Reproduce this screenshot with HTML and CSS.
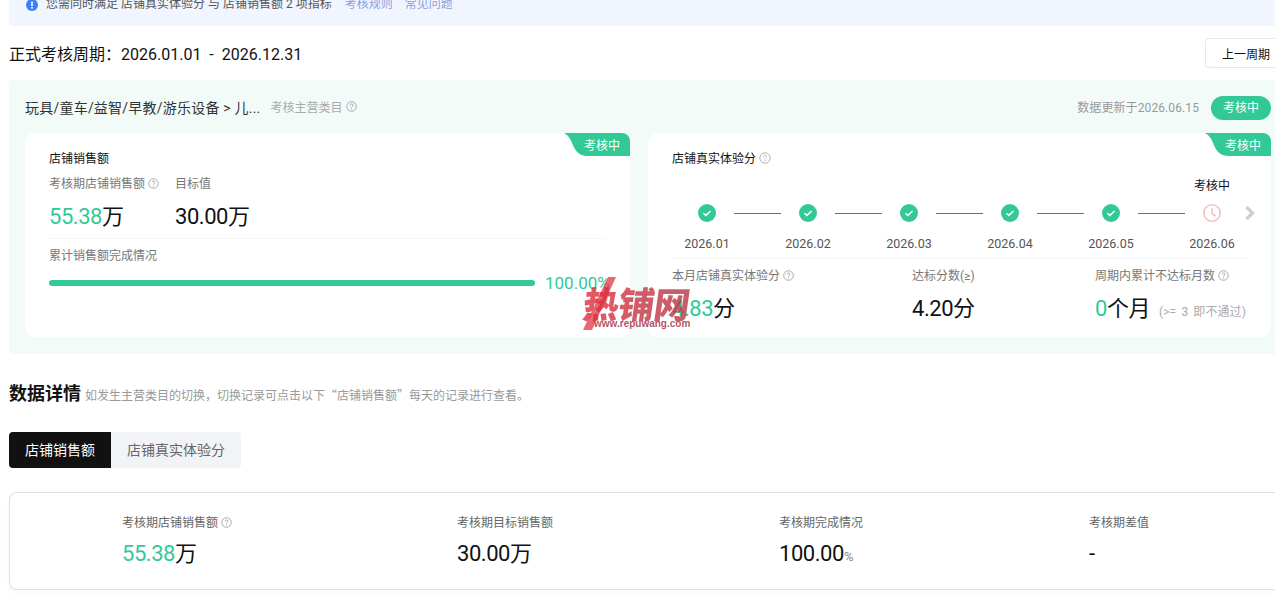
FILE: index.html
```html
<!DOCTYPE html>
<html lang="zh-CN">
<head>
<meta charset="utf-8">
<title>店铺考核</title>
<link rel="stylesheet" href="styles.css">
</head>
<body>
<div class="page">
  <div class="notice">
    <svg class="notice-icon" viewBox="0 0 12 12"><circle cx="6" cy="6" r="6" fill="#3d7ff5"/><rect x="5.2" y="2.6" width="1.6" height="4.4" rx=".6" fill="#fff"/><circle cx="6" cy="8.7" r=".95" fill="#fff"/></svg>
    <span class="notice-text">您需同时满足 店铺真实体验分 与 店铺销售额 2 项指标</span>
    <a class="notice-link">考核规则</a>
    <a class="notice-link">常见问题</a>
  </div>

  <div class="period-row">
    <div class="period">正式考核周期：<span class="period-date">2026.01.01 - 2026.12.31</span></div>
    <button class="prev-btn">上一周期</button>
  </div>

  <section class="panel">
    <div class="panel-head">
      <div class="cat">玩具/童车/益智/早教/游乐设备 &gt; 儿...</div>
      <div class="cat-label">考核主营类目 <svg class="help" viewBox="0 0 12 12"><use href="#q"/></svg></div>
      <div class="updated">数据更新于2026.06.15</div>
      <div class="pill">考核中</div>
    </div>
    <div class="cards">
      <div class="card card-left">
        <svg class="corner" viewBox="0 0 66 23"><path d="M0 0H58a8 8 0 0 1 8 8V23H24C14 23 11 17 8 10 6 5 4 2 0 0Z" fill="#33c997"/></svg>
        <span class="corner-text">考核中</span>
        <h3 class="card-title">店铺销售额</h3>
        <div class="metric-pair">
          <div class="metric-a">
            <div class="label">考核期店铺销售额 <svg class="help" viewBox="0 0 12 12"><use href="#q"/></svg></div>
            <div class="value"><em>55.38</em>万</div>
          </div>
          <div class="metric-b">
            <div class="label">目标值</div>
            <div class="value">30.00万</div>
          </div>
        </div>
        <div class="divider"></div>
        <div class="label progress-label">累计销售额完成情况</div>
        <div class="progress-row">
          <div class="progress"></div>
          <div class="progress-num">100.00%</div>
        </div>
      </div>

      <div class="card card-right">
        <svg class="corner" viewBox="0 0 66 23"><path d="M0 0H58a8 8 0 0 1 8 8V23H24C14 23 11 17 8 10 6 5 4 2 0 0Z" fill="#33c997"/></svg>
        <span class="corner-text">考核中</span>
        <h3 class="card-title">店铺真实体验分 <svg class="help help-t" viewBox="0 0 12 12"><use href="#q"/></svg></h3>
        <div class="current">考核中</div>
        <div class="timeline">
          <div class="step"><svg class="dot" viewBox="0 0 18 18"><use href="#ok"/></svg><span class="month">2026.01</span></div>
          <i class="line"></i>
          <div class="step"><svg class="dot" viewBox="0 0 18 18"><use href="#ok"/></svg><span class="month">2026.02</span></div>
          <i class="line"></i>
          <div class="step"><svg class="dot" viewBox="0 0 18 18"><use href="#ok"/></svg><span class="month">2026.03</span></div>
          <i class="line"></i>
          <div class="step"><svg class="dot" viewBox="0 0 18 18"><use href="#ok"/></svg><span class="month">2026.04</span></div>
          <i class="line"></i>
          <div class="step"><svg class="dot" viewBox="0 0 18 18"><use href="#ok"/></svg><span class="month">2026.05</span></div>
          <i class="line"></i>
          <div class="step"><svg class="dot" viewBox="0 0 18 18"><circle cx="9" cy="9" r="8.2" fill="none" stroke="#fb9fa8" stroke-width="1.1"/><path d="M9 4.2V9.4L12.6 12.2" fill="none" stroke="#fb9fa8" stroke-width="1.1"/></svg><span class="month">2026.06</span></div>
          <svg class="chev" viewBox="0 0 10 14"><path d="M1.5 1L7.5 7 1.5 13" fill="none" stroke="#cfcfcf" stroke-width="3.4"/></svg>
        </div>
        <div class="divider"></div>
        <div class="score-row">
          <div class="score-a">
            <div class="label">本月店铺真实体验分 <svg class="help" viewBox="0 0 12 12"><use href="#q"/></svg></div>
            <div class="value"><em>4.83</em>分</div>
          </div>
          <div class="score-b">
            <div class="label">达标分数(≥)</div>
            <div class="value">4.20分</div>
          </div>
          <div class="score-c">
            <div class="label">周期内累计不达标月数 <svg class="help" viewBox="0 0 12 12"><use href="#q"/></svg></div>
            <div class="value"><em>0</em>个月<small class="hint">(&gt;= 3 即不通过)</small></div>
          </div>
        </div>
      </div>
    </div>
  </section>

  <div class="detail-head">
    <h2 class="detail-title">数据详情</h2>
    <span class="detail-sub">如发生主营类目的切换，切换记录可点击以下“店铺销售额”每天的记录进行查看。</span>
  </div>

  <div class="tabs">
    <div class="tab tab-on">店铺销售额</div>
    <div class="tab">店铺真实体验分</div>
  </div>

  <div class="summary">
    <div class="sum">
      <div class="sum-label">考核期店铺销售额 <svg class="help" viewBox="0 0 12 12"><use href="#q"/></svg></div>
      <div class="sum-value"><em>55.38</em>万</div>
    </div>
    <div class="sum">
      <div class="sum-label">考核期目标销售额</div>
      <div class="sum-value">30.00万</div>
    </div>
    <div class="sum">
      <div class="sum-label">考核期完成情况</div>
      <div class="sum-value">100.00<small class="pct">%</small></div>
    </div>
    <div class="sum">
      <div class="sum-label">考核期差值</div>
      <div class="sum-value">-</div>
    </div>
  </div>

  <div class="watermark">
    <svg class="wm-slash" viewBox="0 0 34 60"><path d="M25 5H33L9 58H0Z" fill="#e2434f" fill-opacity=".8"/></svg>
    <div class="wm-main">热铺网</div>
    <div class="wm-sub">www.repuwang.com</div>
  </div>
</div>

<svg class="defs" width="0" height="0">
  <defs>
    <g id="q"><circle cx="6" cy="6" r="5.2" fill="none" stroke="currentColor" stroke-width=".9"/><path d="M4.4 4.8C4.4 3.8 5.1 3.2 6 3.2S7.6 3.8 7.6 4.6C7.6 5.7 6 5.8 6 7.2" fill="none" stroke="currentColor" stroke-width=".9"/><circle cx="6" cy="8.7" r=".6" fill="currentColor"/></g>
    <g id="ok"><circle cx="9" cy="9" r="9" fill="#33c997"/><path d="M5.4 9.2L7.9 11.4 12.6 7" fill="none" stroke="#fff" stroke-width="1.5"/></g>
  </defs>
</svg>
</body>
</html>
```
FILE: styles.css
```css
* { box-sizing: border-box; }
html, body { margin: 0; padding: 0; background: #fff; overflow: hidden; }
body { width: 1275px; height: 607px; color: #111; }
.page { position: relative; width: 1275px; height: 607px; overflow: hidden; padding-left: 9px; font-family: Roboto, "Noto Sans CJK SC", sans-serif; }
.defs { position: absolute; }
em { font-style: normal; color: #33c997; }

.notice { width: 1266px; height: 26px; background: #f0f5ff; border-radius: 0 0 3px 3px; padding: 0 0 0 17px; display: flex; align-items: flex-start; font-size: 12px; line-height: 12px; color: #555; margin-bottom: 12px; overflow: hidden; }
.notice-icon { width: 12px; height: 12px; margin: -1px 8px 0 0; flex: none; }
.notice-text { margin-top: -3px; line-height: 14px; }
.notice-link { color: #8f9fdb; margin: -3px 0 0 12px; line-height: 14px; }
.notice-text + .notice-link { margin-left: 13px; }

.period-row { display: flex; justify-content: space-between; width: 1266px; height: 30px; align-items: center; margin-bottom: 12px; }
.period { font-size: 16px; color: #111; margin-top: -1px; }
.period-date { word-spacing: 4px; }
.prev-btn { width: 70px; height: 30px; flex: none; background: #fff; border: 1px solid #e6e7ef; border-right: 0; border-radius: 4px 0 0 4px; font: 12px Roboto, "Noto Sans CJK SC", sans-serif; color: #111; padding: 0 0 0 16px; text-align: left; }

.panel { width: 1266px; height: 274px; background: #f2fbf8; border-radius: 4px 0 0 4px; padding: 0 4px 0 16px; }
.panel-head { height: 53px; display: flex; align-items: center; }
.cat { font-size: 14px; color: #333; letter-spacing: .22px; }
.cat-label { font-size: 12px; color: #aaa; margin-left: 10px; display: flex; align-items: center; gap: 3px; }
.updated { font-size: 12px; color: #999; margin-left: auto; letter-spacing: .1px; }
.pill { width: 60px; height: 24px; line-height: 24px; background: #33c997; color: #fff; border-radius: 12px; font-size: 12px; text-align: center; margin: 3px 0 0 12px; }
.help { width: 11px; height: 11px; color: #999; vertical-align: -1px; flex: none; }
.help-t { width: 12px; height: 12px; color: #aaa; }

.cards { display: flex; gap: 18px; }
.card { position: relative; height: 204px; background: #fff; border-radius: 10px; padding: 18px 24px 0; }
.card-left { width: 605px; }
.card-right { width: 623px; }
.corner { position: absolute; top: 0; right: 0; width: 66px; height: 23px; }
.corner-text { position: absolute; top: 4px; right: 10px; font-size: 12px; line-height: 18px; color: #fff; }
.card-title { margin: 0; font-size: 12px; line-height: 16px; font-weight: 400; color: #111; }

.label { font-size: 12px; line-height: 16px; color: #777; white-space: nowrap; }
.value { font-size: 22px; line-height: 28px; color: #111; white-space: nowrap; letter-spacing: -.45px; }

.metric-pair { display: flex; margin-top: 9px; }
.metric-a { width: 126px; }
.metric-a .value, .metric-b .value { margin-top: 11px; }
.divider { height: 1px; background: #f5f5f5; }
.card-left .divider { margin-top: 7px; width: 557px; }
.progress-label { margin-top: 8px; line-height: 19px; }
.progress-row { display: flex; margin-top: 14px; height: 6px; align-items: center; }
.progress { width: 486px; height: 6px; border-radius: 3px; background: #33c997; flex: none; }
.progress-num { margin-left: 10px; font-size: 17px; line-height: 20px; color: #33c997; white-space: nowrap; }

.current { font-size: 12px; line-height: 16px; color: #111; text-align: right; margin-top: 11px; padding-right: 17px; }
.timeline { position: relative; display: flex; align-items: flex-start; margin-top: 3px; height: 61px; }
.step { width: 70px; flex: none; display: flex; flex-direction: column; align-items: center; }
.dot { width: 18px; height: 18px; flex: none; margin-top: 7px; }
.month { font-size: 12.5px; line-height: 16px; color: #555; margin-top: 14px; }
.line { width: 47px; height: 1px; background: #f0325a; margin: 16px -8px 0; flex: none; }
.chev { position: absolute; right: -8px; top: 9px; width: 10px; height: 14px; }

.card-right .divider { width: 575px; }
.score-row { display: flex; margin-top: 9px; }
.score-a { width: 240px; }
.score-b { width: 183px; }
.score-row .value { margin-top: 11px; }
.hint { font-size: 12px; color: #aaa; margin-left: 9px; letter-spacing: .1px; word-spacing: 2px; }

.detail-head { display: flex; align-items: center; margin-top: 28px; height: 24px; }
.detail-title { margin: 0; font-size: 18px; line-height: 24px; font-weight: 700; color: #111; }
.detail-sub { font-family: "Noto Sans CJK SC", sans-serif; font-size: 12px; color: #999; margin-left: 4px; }

.tabs { display: flex; width: 232px; height: 36px; margin-top: 26px; background: #f2f3f7; border-radius: 4px; overflow: hidden; }
.tab { padding: 0 16px; line-height: 36px; font-size: 14px; color: #666; }
.tab-on { background: #111; color: #fff; width: 102px; }

.summary { display: grid; grid-template-columns: 335px 322px 310px 1fr; width: 1266px; height: 98px; margin-top: 24px; border: 1px solid #dedfe6; border-right: 0; border-radius: 8px 0 0 8px; padding: 21px 0 0 112px; box-shadow: 0 4px 8px rgba(0,0,0,.025); }
.sum-label { font-size: 12px; line-height: 18px; color: #666; white-space: nowrap; }
.sum-value { font-size: 22px; line-height: 30px; margin-top: 7px; color: #111; letter-spacing: -.45px; }
.pct { font-size: 13px; color: #888; letter-spacing: 0; }

.watermark { position: absolute; left: 583px; top: 272px; width: 110px; height: 62px; pointer-events: none; }
.wm-slash { position: absolute; left: 0; top: 0; width: 34px; height: 60px; }
.wm-main { position: absolute; left: 0; top: 9px; font-size: 36px; line-height: 50px; font-weight: 900; letter-spacing: -.5px; transform: skewX(-8deg); white-space: nowrap; background: linear-gradient(90deg, rgba(226,45,62,.8), rgba(178,50,66,.78)); -webkit-background-clip: text; background-clip: text; color: transparent; }
.wm-sub { position: absolute; left: 11px; top: 46px; font-size: 10px; line-height: 11px; font-weight: 700; color: rgba(165,50,70,.85); white-space: nowrap; font-family: "Liberation Sans", sans-serif; }
```
